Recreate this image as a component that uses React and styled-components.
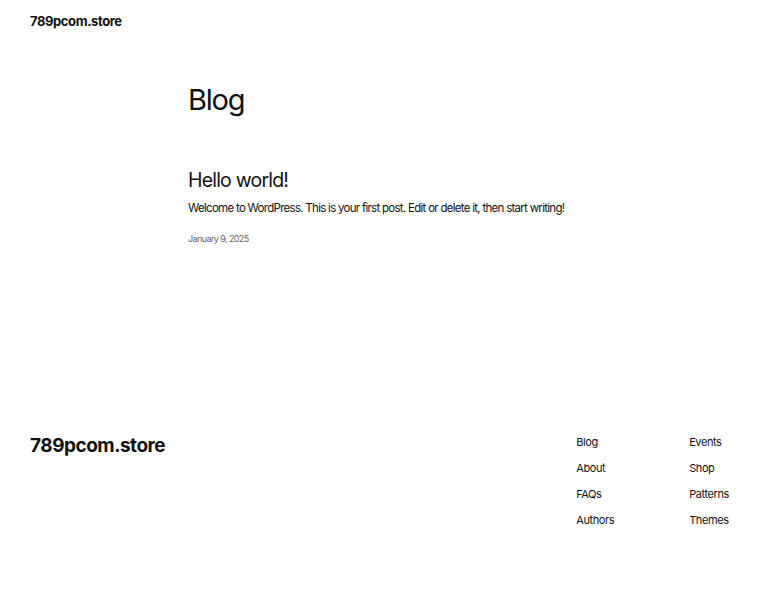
import styled, { createGlobalStyle } from "styled-components";

const Global = createGlobalStyle`
  body {
    margin: 0;
    background: #fff;
    color: #111;
    font-family: Inter, "Noto Sans", sans-serif;
  }
`;

const links = [
  ["Blog", "About", "FAQs", "Authors"],
  ["Events", "Shop", "Patterns", "Themes"],
];

const App = () => {
  return (
    <Page>
      <Global />
      <Header>
        <SiteTitle>789pcom.store</SiteTitle>
      </Header>
      <Main>
        <PageTitle>Blog</PageTitle>
        <Post>
          <PostTitle>Hello world!</PostTitle>
          <Excerpt>
            Welcome to WordPress. This is your first post. Edit or delete it, then start writing!
          </Excerpt>
          <PostDate>January 9, 2025</PostDate>
        </Post>
      </Main>
      <Footer>
        <FooterTitle>789pcom.store</FooterTitle>
        <Nav>
          {links.map((col, i) => (
            <NavColumn key={i}>
              {col.map((item) => (
                <NavLink key={item}>{item}</NavLink>
              ))}
            </NavColumn>
          ))}
        </Nav>
      </Footer>
    </Page>
  );
};

export default App;

const Page = styled.div`
  width: 760px;
  min-height: 600px;
`;
const Header = styled.header`
  padding: 12px 30px 0;
  height: 30px;
`;
const SiteTitle = styled.div`
  font-size: 13px;
  font-weight: 700;
  letter-spacing: -0.4px;
  line-height: 18px;
`;
const Main = styled.main`
  padding: 38px 0 0 188px;
  height: 354px;
`;
const PageTitle = styled.h1`
  margin: 0;
  font-size: 29px;
  font-weight: 400;
  letter-spacing: -1.2px;
  line-height: 40px;
`;
const Post = styled.article`
  margin-top: 47px;
`;
const PostTitle = styled.h2`
  margin: 0;
  font-size: 19.5px;
  font-weight: 400;
  letter-spacing: -0.8px;
  line-height: 26px;
`;
const Excerpt = styled.p`
  margin: 6px 0 0;
  font-size: 11.5px;
  letter-spacing: -0.72px;
  line-height: 18px;
`;
const PostDate = styled.div`
  margin-top: 15px;
  font-size: 9px;
  color: #666;
  letter-spacing: -0.6px;
  line-height: 14px;
`;
const Footer = styled.footer`
  display: flex;
  justify-content: space-between;
  padding: 0 31px 0 30px;
`;
const FooterTitle = styled.div`
  font-size: 19px;
  font-weight: 700;
  letter-spacing: -0.5px;
  line-height: 26px;
  margin-top: -1px;
`;
const Nav = styled.nav`
  display: flex;
  gap: 75px;
`;
const NavColumn = styled.div`
  display: flex;
  flex-direction: column;
  gap: 10px;
`;
const NavLink = styled.a`
  font-size: 11px;
  letter-spacing: -0.4px;
  line-height: 16px;
  color: #111;
`;
